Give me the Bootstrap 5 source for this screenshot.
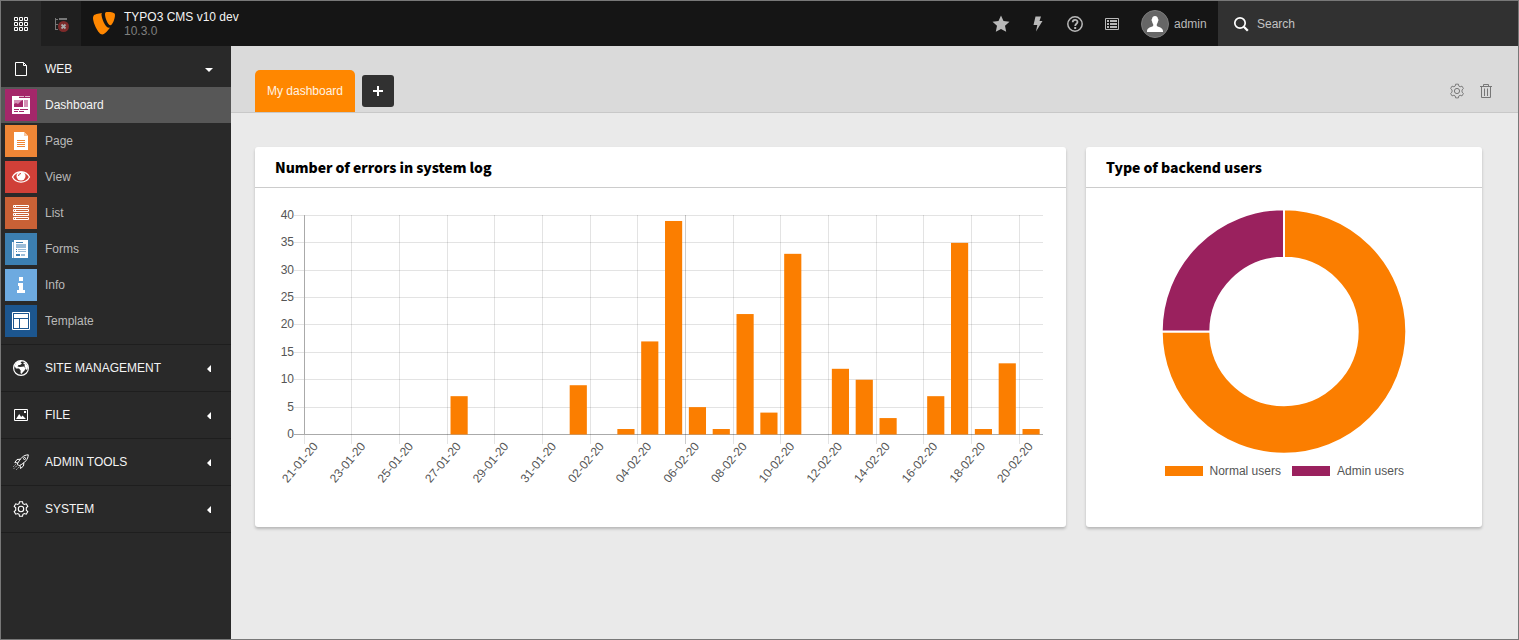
<!DOCTYPE html>
<html lang="en">
<head>
    <meta charset="UTF-8">
    <meta name="viewport" content="width=device-width, initial-scale=1.0">
    <title>TYPO3 CMS v10 dev</title>
    <link href="https://cdn.jsdelivr.net/npm/bootstrap@5.3.0/dist/css/bootstrap.min.css" rel="stylesheet">
    <style>
        body {
            height: 100vh;
            border: 1px solid #787878;
            overflow: hidden;
            background: #eaeaea;
            font-family: "Liberation Sans", Arial, sans-serif;
            font-size: 12px;
            line-height: 14px;
        }
        svg { display: block; flex: none; }
        .topbar { height: 45px; background: #151515; color: #b9b9b9; }
        .top-cell { width: 40px; background: #292929; }
        .top-cell-dim { background: #1f1f1f; }
        .site-logo { margin-left: 12px; }
        .site-name { margin: 1px 0 0 9px; color: #f4f4f4; }
        .site-version { color: #808080; }
        .tool { width: 37px; }
        .avatar { width: 28px; height: 28px; background: #666; border: 1px solid #7c7c7c; }
        .user { width: 88px; padding-left: 11px; gap: 5px; }
        .search { width: 300px; background: #313131; padding-left: 15px; gap: 8px; color: #c3c3c3; }
        .sidebar { width: 230px; background: #292929; color: #b9b9b9; }
        .group { border-bottom: 1px solid #1e1e1e; }
        .group-head { height: 46px; padding: 0 17px 0 12px; color: #f4f4f4; }
        .group-head .label { margin-left: 16px; }
        .group-open { padding-bottom: 5px; }
        .group-open .group-head { height: 41px; padding-top: 4px; }
        .module { height: 36px; padding-left: 4px; gap: 8px; }
        .module.active { background: #575757; color: #f4f4f4; }
        .module-icon { width: 32px; height: 32px; }
        .doc-header { height: 67px; background: #dadada; border-bottom: 1px solid #c8c8c8; padding: 0 24px; }
        .dash-tab { width: 100px; height: 42px; background: #ff8700; color: #fff3e4; border-radius: 5px 5px 0 0; }
        .dash-add { width: 32px; height: 32px; background: #313131; border-radius: 3px; margin: 0 0 5px 7px; }
        .doc-tools { gap: 13px; padding-bottom: 13px; }
        .widgets { padding: 34px 0 0 24px; gap: 20px; }
        .widget { height: 380px; background: #fff; border-radius: 3px; box-shadow: 0 2px 3px rgba(0, 0, 0, .22); }
        .widget-wide { width: 811px; }
        .widget-narrow { width: 396px; }
        .widget-title {
            height: 41px;
            margin: 0;
            padding: 0 20px;
            border-bottom: 1px solid #ccc;
            font: 900 14px/40px "Noto Sans CJK SC", sans-serif;
            letter-spacing: -.05px;
            color: #000;
        }
        svg text { font-family: "Liberation Sans", Arial, sans-serif; font-size: 12px; fill: #555; }
    </style>
</head>
<body class="d-flex flex-column">
    <header class="topbar d-flex flex-shrink-0">
        <div class="top-cell d-flex align-items-center justify-content-center">
            <svg width="14" height="14" fill="none" stroke="#fff"><path d="M.5.5h3v3h-3zM5.500.5h3v3h-3zM10.500.5h3v3h-3zM.5 5.500h3v3h-3zM5.500 5.500h3v3h-3zM10.500 5.500h3v3h-3zM.5 10.500h3v3h-3zM5.500 10.500h3v3h-3zM10.500 10.500h3v3h-3z"/></svg>
        </div>
        <div class="top-cell top-cell-dim d-flex align-items-center justify-content-center">
            <svg width="16" height="16"><path d="M2.500 2v12M2 3.500h3M2 8.500h3M2 13.500h3M6 8.500h7" fill="none" stroke="#777"/><path d="M6 2h8v2H6z" fill="#777"/><circle cx="10.500" cy="10.500" r="5.500" fill="#7d2a2a"/><path d="M8.500 8.500l4 4m0-4l-4 4" stroke="#aaa" stroke-width="1.800"/></svg>
        </div>
        <div class="site-logo d-flex align-items-center">
            <svg width="22" height="23" fill="#ff8700"><path d="M17 15.500c-.5.200-.9.200-1.300.200C12 15.700 8.500 5.500 8.500 2.800c0-1.100.3-1.400.7-1.700C5 1.500 1.300 2.500.5 4c-.4.500-.5 1.200-.5 2 0 4.900 5.400 16.500 9.300 16.500 2 0 5-3 7.700-7M14.500 0c3.700 0 7.500.5 7.500 2.700 0 4.500-2.800 10.500-4.500 10.500-2.700 0-5.500-7.500-5.500-11C12 .4 12.700 0 14.500 0"/></svg>
            <div class="site-name">TYPO3 CMS v10 dev<div class="site-version">10.3.0</div></div>
        </div>
        <div class="d-flex align-items-center ms-auto">
            <div class="tool d-flex justify-content-center"><svg width="18" height="18" fill="#b9b9b9"><path d="M9 .5l2.500 5.500 6 .7-4.500 4.100 1.200 6L9 14l-5.200 2.800L5 10.800.5 6.700l6-.7z"/></svg></div>
            <div class="tool d-flex justify-content-center"><svg width="16" height="16" fill="#b9b9b9"><path d="M5.500.5H11L9.500 5H12.500L6 15.500 7.300 9H3.500z"/></svg></div>
            <div class="tool d-flex justify-content-center"><svg width="16" height="16" fill="none" stroke="#b9b9b9"><circle cx="8" cy="8" r="7.200" stroke-width="1.500"/><path d="M5.700 6.300C5.700 3 10.500 3.200 10.500 6c0 1.700-2.300 1.900-2.300 4" stroke-width="1.800"/><path d="M8.200 11v2" stroke-width="2"/></svg></div>
            <div class="tool d-flex justify-content-center"><svg width="14" height="14" fill="none" stroke="#b9b9b9"><path d="M.5 1.500h13v11H.5z"/><path d="M2 4h2M5 4h7M2 7h2M5 7h7M2 10h2M5 10h7" stroke-width="2"/></svg></div>
            <div class="user d-flex align-items-center">
                <div class="avatar rounded-circle d-flex align-items-center justify-content-center"><svg width="16" height="16" fill="#fff"><path d="M5 3c0-4 6-4 6 0 .6 0 .6 2 0 2.300-.2 1.500-.8 2.300-1.200 2.900v1.600c.3 1.300 6.200 1.200 6.200 5.200v1H0v-1c0-4 5.900-3.900 6.200-5.200V8.200C5.800 7.600 5.200 6.800 5 5.300 4.400 5 4.400 3 5 3"/></svg></div>
                <span>admin</span>
            </div>
        </div>
        <div class="search d-flex align-items-center"><svg width="16" height="16" fill="none" stroke="#fff"><circle cx="7" cy="7" r="5.200" stroke-width="1.700"/><path d="M10.800 10.800l4 4" stroke-width="2.300"/></svg><span>Search</span></div>
    </header>

    <div class="d-flex flex-grow-1">
        <nav class="sidebar flex-shrink-0">
            <div class="group group-open">
                <div class="group-head d-flex align-items-center">
                    <svg width="16" height="16" fill="none" stroke="#fff"><path d="M2.500 1.500h8l3 3v10h-11zM10.500 1.500v3h3"/></svg>
                    <span class="label">WEB</span>
                    <svg class="ms-auto" width="10" height="6" fill="#fff"><path d="M1 2h8L5 6z"/></svg>
                </div>
                <div id="moduleList"></div>
            </div>
            <div class="group">
                <div class="group-head d-flex align-items-center">
                    <svg width="16" height="16"><circle cx="8" cy="8" r="7.400" fill="none" stroke="#fff" stroke-width="1.200"/><path d="M1.500 6L3 3l3-2h3L7.500 2.500l1.500 1-2 1.500L5.500 5l-1 1.500L7 7l4-.5 1.500 2-1 2-1.500 1.500L8.500 14l-1-1 .2-2.500L6 8.500 3 8.500zM10.500 2.500l2 .5L15 6.500 14.500 9l-1.500 1-.5-2-1-2 .5-1.500-1.500-.5z" fill="#fff"/></svg>
                    <span class="label">SITE MANAGEMENT</span>
                    <svg class="ms-auto" width="10" height="8" fill="#fff"><path d="M3 5l4-4v8z"/></svg>
                </div>
            </div>
            <div class="group">
                <div class="group-head d-flex align-items-center">
                    <svg width="16" height="16"><path d="M1.500 2.500h13v11h-13z" fill="none" stroke="#fff"/><path d="M3 12l3.200-5 2 3 1.300-1.500L13 12zM11 4h2v2h-2z" fill="#fff"/></svg>
                    <span class="label">FILE</span>
                    <svg class="ms-auto" width="10" height="8" fill="#fff"><path d="M3 5l4-4v8z"/></svg>
                </div>
            </div>
            <div class="group">
                <div class="group-head d-flex align-items-center">
                    <svg width="16" height="16" fill="none" stroke="#fff"><path d="M15.300.8C10.500 1 7.500 4 4.300 10l1.800 1.800C12 8.700 15 5.500 15.300.8zM7.500 5.200L4 5.500 1.800 8.500l3 .5M10.900 8.500L10.500 12l-3 2.500-.5-3.200"/><circle cx="11.500" cy="4.500" r="1"/><path d="M4.500 11L.5 15M2.500 10.500l-2 2M5.500 13.500l-2 2" stroke-dasharray="1 1"/></svg>
                    <span class="label">ADMIN TOOLS</span>
                    <svg class="ms-auto" width="10" height="8" fill="#fff"><path d="M3 5l4-4v8z"/></svg>
                </div>
            </div>
            <div class="group">
                <div class="group-head d-flex align-items-center">
                    <svg width="16" height="16" viewBox="0 0 16 16" fill="none" stroke="#fff" stroke-width="1.100"><path id="gearShape" d="M6.500.7h3l.4 2 1.400.8 2-.7 1.500 2.600-1.500 1.400v2.400l1.500 1.400-1.500 2.600-2-.7-1.400.8-.4 2h-3l-.4-2-1.400-.8-2 .7-1.500-2.600 1.500-1.400V6.800L1.200 5.400l1.500-2.600 2 .7 1.400-.8z"/><circle cx="8" cy="8" r="2.700"/></svg>
                    <span class="label">SYSTEM</span>
                    <svg class="ms-auto" width="10" height="8" fill="#fff"><path d="M3 5l4-4v8z"/></svg>
                </div>
            </div>
        </nav>

        <main class="flex-grow-1">
            <div class="doc-header d-flex align-items-end">
                <div class="dash-tab d-flex align-items-center justify-content-center">My dashboard</div>
                <div class="dash-add d-flex align-items-center justify-content-center"><svg width="10" height="10" fill="#fff"><path d="M4 0h2v4h4v2H6v4H4V6H0V4h4z"/></svg></div>
                <div class="doc-tools d-flex ms-auto">
                    <svg width="16" height="16" viewBox="0 0 16 16" fill="none" stroke="#777"><use href="#gearShape" transform="translate(.5 .5) scale(.94)"/><circle cx="8" cy="8" r="2.600"/></svg>
                    <svg width="16" height="16" fill="none" stroke="#777"><path d="M2 3.500h12M5.500 3V1.500h5V3M3.500 4v10.500h9V4M6.500 5.500V13M9.500 5.500V13"/></svg>
                </div>
            </div>
            <div class="widgets d-flex">
                <section class="widget widget-wide">
                    <h2 class="widget-title">Number of errors in system log</h2>
                    <svg id="errorChart" width="811" height="339"></svg>
                </section>
                <section class="widget widget-narrow">
                    <h2 class="widget-title">Type of backend users</h2>
                    <svg width="396" height="339">
                        <g stroke="#fff" stroke-width="2">
                            <path d="M198 21.200A122.300 122.300 0 1 1 75.700 143.500H124.300A73.700 73.700 0 1 0 198 69.800z" fill="#fb7e00"/>
                            <path d="M75.700 143.500A122.300 122.300 0 0 1 198 21.200V69.800A73.700 73.700 0 0 0 124.300 143.500z" fill="#9a215e"/>
                        </g>
                        <path d="M79 278h38v10H79z" fill="#fb7e00"/>
                        <text x="123.500" y="287" textLength="71.500">Normal users</text>
                        <path d="M206 278h38v10h-38z" fill="#9a215e"/>
                        <text x="251" y="287" textLength="67">Admin users</text>
                    </svg>
                </section>
            </div>
        </main>
    </div>

    <script>
        const modules = [
            { name: 'Dashboard', color: '#a4276a', active: true, icon: '<path d="M7 7h7v2h11v16H7z" fill="#fff"/><path d="M14 7h5v1h-5zM20 7h5v1h-5z" fill="#e3b5cd"/><path d="M9 11h9v7H9zM19 11h4v7h-4z" fill="#d48fb4"/><path d="M9 15l2-1 2 1 3-3 2-1v7H9zM9 20h5v1H9zM15 20h8v1h-8zM9 22h4v1H9zM14 22h5v1h-5z" fill="#a4276a"/>' },
            { name: 'Page', color: '#ef8636', icon: '<path d="M9 7h10l4 4v14H9z" fill="#fff"/><path d="M19 7v4h4z" fill="#f8c69f"/><path d="M12 15.500h8M12 17.500h8M12 19.500h8M12 21.500h8" stroke="#ef8636"/>' },
            { name: 'View', color: '#d04038', icon: '<path d="M7.500 16C11 9.200 21 9.200 24.500 16 21 22.800 11 22.800 7.500 16z" fill="none" stroke="#fff" stroke-width="1.300"/><circle cx="16" cy="15" r="4.500" fill="#fff"/><path d="M13.500 15a2.500 2.500 0 0 1 2.500-2.500" fill="none" stroke="#d04038"/>' },
            { name: 'List', color: '#c96136', icon: '<path d="M8.500 8.500h15v2h-15zM8.500 12.500h15v2h-15zM8.500 16.500h15v2h-15zM8.500 20.500h15v2h-15zM10.500 8v3M10.500 12v3M10.500 16v3M10.500 20v3" fill="none" stroke="#fff"/>' },
            { name: 'Forms', color: '#3c7fb1', icon: '<path d="M9 7h14v18H9z" fill="#fff"/><path d="M7 9h1v16H7z" fill="#fff"/><path d="M8 9h1v16H8z" fill="#9cbdd8"/><path d="M11 11h10v4H11zM13 16h8v1h-8zM13 18h8v1h-8zM16 21h4v2h-4z" fill="#9cbdd8"/><path d="M11 9h7v1h-7zM11 16h1v1h-1zM11 18h1v1h-1zM11 21h4v2h-4z" fill="#3c7fb1"/>' },
            { name: 'Info', color: '#6daae0', icon: '<path d="M14 8h4v4h-4zM13 14h5v7h2v3h-8v-3h2v-4h-1z" fill="#fff"/>' },
            { name: 'Template', color: '#1c568f', icon: '<path d="M7.500 7.500h17v17h-17z" fill="none" stroke="#fff"/><path d="M9 9h14v4H9zM9 14h5v9H9zM15 14h8v9h-8z" fill="#fff"/>' }
        ];

        document.getElementById('moduleList').innerHTML = modules.map(m => `
            <div class="module d-flex align-items-center ${m.active ? 'active' : ''}">
                <div class="module-icon" style="background: ${m.color}"><svg width="32" height="32">${m.icon}</svg></div>
                <span>${m.name}</span>
            </div>
        `).join('');

        // Errors per day, 21-01-20 up to 20-02-20
        const errors = [0, 0, 0, 0, 0, 0, 7, 0, 0, 0, 0, 9, 0, 1, 17, 39, 5, 1, 22, 4, 33, 0, 12, 10, 3, 0, 7, 35, 1, 13, 1];
        const left = 49.2, bottom = 246.5, right = 788, unit = 5.475;
        const step = (right - left) / errors.length;

        function drawErrorChart() {
            let out = '';
            for (let v = 0; v <= 40; v += 5) {
                const y = Math.ceil(bottom - v * unit - 1) + 0.5;
                out += `<path d="M39 ${y}H${right}" stroke="${v ? '#e3e3e3' : '#aaa'}"/>`;
                out += `<text x="39" y="${y + 3.5}" text-anchor="end">${v}</text>`;
            }
            for (let i = 0; i < errors.length; i += 2) {
                const x = Math.floor(left + i * step) + 0.5;
                const date = new Date(Date.UTC(2020, 0, 21 + i)).toISOString();
                const label = `${date.slice(8, 10)}-${date.slice(5, 7)}-20`;
                const tx = left + (i + 0.5) * step - 0.7;
                out += `<path d="M${x} 27V256" stroke="#000" stroke-opacity="${i === 16 ? 0.2 : 0.11}"/>`;
                out += `<text transform="translate(${tx} 256) rotate(-50)" y="4" text-anchor="end">${label}</text>`;
            }
            out += `<path d="M49.5 27V247" stroke="#aaa"/>`;
            errors.forEach((n, i) => {
                if (!n) return;
                const x = left + (i + 0.14) * step;
                out += `<rect x="${x}" y="${bottom - n * unit}" width="${step * 0.72}" height="${n * unit}" fill="#fb7e00"/>`;
            });
            document.getElementById('errorChart').innerHTML = out;
        }

        drawErrorChart();
    </script>
    <script src="https://cdn.jsdelivr.net/npm/bootstrap@5.3.0/dist/js/bootstrap.bundle.min.js"></script>
</body>
</html>
